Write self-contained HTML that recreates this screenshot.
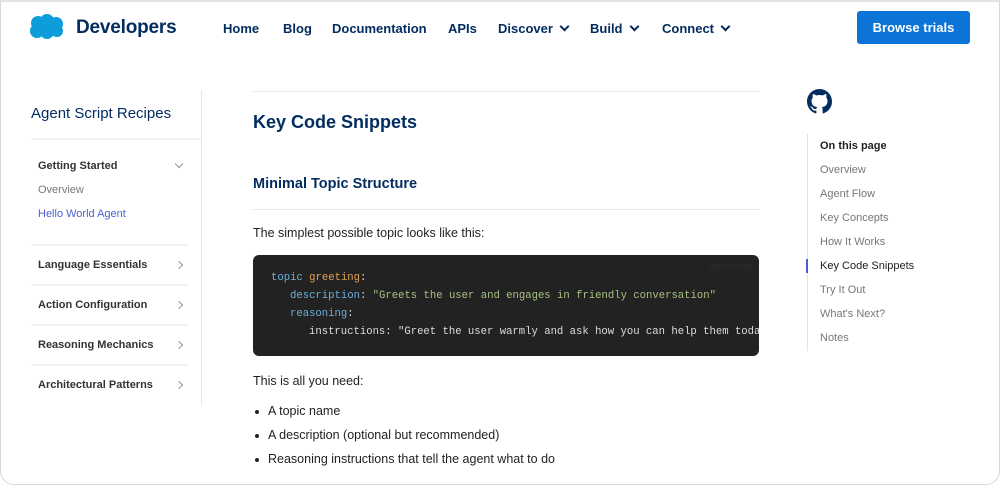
<!DOCTYPE html>
<html><head><meta charset="utf-8"><style>
*{margin:0;padding:0;box-sizing:border-box}
body{width:1000px;height:485px;overflow:hidden;background:#fff;font-family:"Liberation Sans",sans-serif;position:relative}
.frame{position:absolute;inset:0;border:1px solid #d8d8d8;border-top:2px solid #e4e4e4;border-radius:0 0 14px 14px;pointer-events:none}
.a{position:absolute;white-space:nowrap}
.nav{font-size:13px;color:#032d60;font-weight:bold;top:21px}
.chev{display:inline-block;width:7px;height:7px;border-right:2px solid #032d60;border-bottom:2px solid #032d60;transform:rotate(45deg);margin-left:8px;position:relative;top:-3px}
.side{font-size:11px;color:#333;font-weight:bold}
.sch{position:absolute;left:176px;width:6px;height:6px;border-right:1px solid #999;border-bottom:1px solid #999;transform:rotate(-45deg)}
.hl{position:absolute;left:31px;width:156px;height:2px;background:#f0f0f0}
.toc{font-size:11px;color:#777;left:820px}
.code{position:absolute;left:253px;top:255px;width:506px;height:101px;background:#222;border-radius:6px;overflow:hidden}
.code div{position:absolute;font-family:"Liberation Mono",monospace;font-size:10.6px;color:#ddd;white-space:pre}
.k{color:#6cb0d8}.o{color:#e0a050}.s{color:#a8c080}
.body{font-size:12.5px;color:#222}
.li{font-size:12.5px;color:#222;left:268px}
.dot{position:absolute;left:255px;width:4px;height:4px;border-radius:50%;background:#222}
</style></head><body>
<svg class="a" style="left:29px;top:14px" width="36" height="26" viewBox="0 0 36 26"><g fill="#0d9dda"><circle cx="9" cy="9" r="7"/><circle cx="18" cy="7" r="7"/><circle cx="27" cy="10" r="7"/><circle cx="8" cy="17" r="7"/><circle cx="18" cy="18" r="7"/><circle cx="28" cy="17" r="6"/></g></svg>
<div class="a" style="left:76px;top:17px;font-size:19px;font-weight:bold;color:#032d60;letter-spacing:-0.2px">Developers</div>
<div class="a nav" style="left:223px">Home</div>
<div class="a nav" style="left:283px">Blog</div>
<div class="a nav" style="left:332px">Documentation</div>
<div class="a nav" style="left:448px">APIs</div>
<div class="a nav" style="left:498px">Discover<span class="chev"></span></div>
<div class="a nav" style="left:590px">Build<span class="chev"></span></div>
<div class="a nav" style="left:662px">Connect<span class="chev"></span></div>
<div class="a" style="left:857px;top:11px;width:113px;height:33px;background:#0b74d6;border-radius:3px;color:#fff;font-size:13px;font-weight:bold;text-align:center;line-height:33px">Browse trials</div>

<div class="a" style="left:31px;top:105px;font-size:15px;color:#032d60">Agent Script Recipes</div>
<div class="hl" style="top:138px;width:170px"></div>
<div class="a" style="left:201px;top:90px;width:1px;height:315px;background:#e6e6e6"></div>
<div class="a side" style="left:38px;top:160px">Getting Started</div>
<div class="sch" style="top:161px;transform:rotate(45deg)"></div>
<div class="a" style="left:38px;top:184px;font-size:11px;color:#777">Overview</div>
<div class="a" style="left:38px;top:208px;font-size:11px;color:#4a5fd0">Hello World Agent</div>
<div class="hl" style="top:244px"></div>
<div class="a side" style="left:38px;top:259px">Language Essentials</div><div class="sch" style="top:262px"></div>
<div class="hl" style="top:284px"></div>
<div class="a side" style="left:38px;top:299px">Action Configuration</div><div class="sch" style="top:302px"></div>
<div class="hl" style="top:324px"></div>
<div class="a side" style="left:38px;top:339px">Reasoning Mechanics</div><div class="sch" style="top:342px"></div>
<div class="hl" style="top:364px"></div>
<div class="a side" style="left:38px;top:379px">Architectural Patterns</div><div class="sch" style="top:382px"></div>

<div class="a" style="left:253px;top:91px;width:506px;height:1px;background:#e6e6e6"></div>
<div class="a" style="left:253px;top:112px;font-size:18px;font-weight:bold;color:#032d60">Key Code Snippets</div>
<div class="a" style="left:253px;top:176px;font-size:14.5px;font-weight:bold;color:#032d60">Minimal Topic Structure</div>
<div class="a" style="left:253px;top:209px;width:506px;height:1px;background:#e6e6e6"></div>
<div class="a body" style="left:253px;top:226px">The simplest possible topic looks like this:</div>
<div class="code">
<div style="right:6px;top:6px;font-size:9px;color:#2e2e2e;font-family:'Liberation Sans',sans-serif">agentscript</div>
<div style="left:18px;top:17px"><span class="k">topic</span> <span class="o">greeting</span>:</div>
<div style="left:37px;top:35px"><span class="k">description</span>: <span class="s">"Greets the user and engages in friendly conversation"</span></div>
<div style="left:37px;top:53px"><span class="k">reasoning</span>:</div>
<div style="left:56px;top:71px">instructions: "Greet the user warmly and ask how you can help them today"</div>
</div>
<div class="a body" style="left:253px;top:374px">This is all you need:</div>
<div class="dot" style="top:410px"></div><div class="a li" style="top:404px">A topic name</div>
<div class="dot" style="top:434px"></div><div class="a li" style="top:428px">A description (optional but recommended)</div>
<div class="dot" style="top:458px"></div><div class="a li" style="top:452px">Reasoning instructions that tell the agent what to do</div>

<svg class="a" style="left:807px;top:89px" width="25" height="25" viewBox="0 0 16 16"><path fill="#032d60" d="M8 0C3.58 0 0 3.58 0 8c0 3.540 2.29 6.53 5.47 7.59.4.07.55-.17.55-.38 0-.19-.01-.82-.01-1.49-2.01.37-2.530-.49-2.69-.94-.09-.23-.48-.94-.82-1.13-.28-.15-.68-.52-.01-.53.63-.01 1.080.58 1.23.82.72 1.21 1.87.87 2.33.66.07-.52.28-.87.51-1.07-1.78-.2-3.64-.89-3.64-3.95 0-.87.31-1.59.82-2.15-.08-.2-.36-1.02.08-2.12 0 0 .67-.21 2.2.82.64-.18 1.32-.27 2-.27.68 0 1.36.09 2 .27 1.53-1.04 2.2-.82 2.2-.82.44 1.1.16 1.92.08 2.12.51.56.82 1.27.82 2.15 0 3.07-1.87 3.75-3.65 3.95.29.25.54.73.54 1.48 0 1.07-.01 1.93-.01 2.2 0 .21.15.46.55.38A8.013 8.013 0 0016 8c0-4.42-3.58-8-8-8z"/></svg>
<div class="a" style="left:807px;top:134px;width:1px;height:217px;background:#e3e3e3"></div>
<div class="a" style="left:806px;top:259px;width:2px;height:14px;background:#4a5fd0"></div>
<div class="a toc" style="top:140px;color:#222;font-weight:bold">On this page</div>
<div class="a toc" style="top:164px">Overview</div>
<div class="a toc" style="top:188px">Agent Flow</div>
<div class="a toc" style="top:212px">Key Concepts</div>
<div class="a toc" style="top:236px">How It Works</div>
<div class="a toc" style="top:260px;color:#222">Key Code Snippets</div>
<div class="a toc" style="top:284px">Try It Out</div>
<div class="a toc" style="top:308px">What's Next?</div>
<div class="a toc" style="top:332px">Notes</div>
<div class="frame"></div>
</body></html>
